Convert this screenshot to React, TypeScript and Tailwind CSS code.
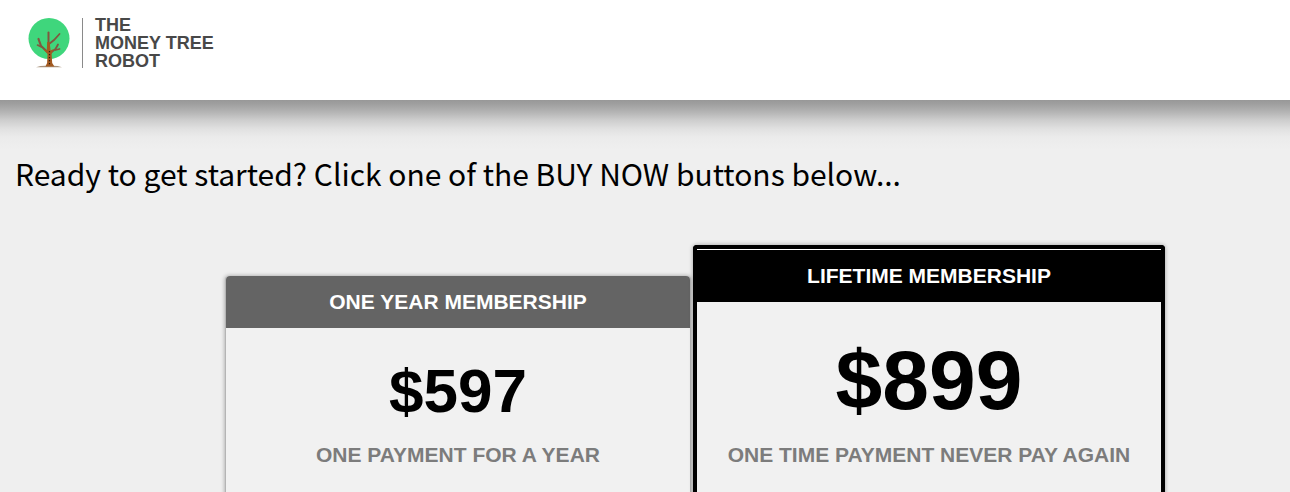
interface Plan {
  title: string;
  price: string;
  note: string;
  featured?: boolean;
}

const plans: Plan[] = [
  {
    title: "ONE YEAR MEMBERSHIP",
    price: "$597",
    note: "ONE PAYMENT FOR A YEAR",
  },
  {
    title: "LIFETIME MEMBERSHIP",
    price: "$899",
    note: "ONE TIME PAYMENT NEVER PAY AGAIN",
    featured: true,
  },
];

function TreeLogo() {
  return (
    <svg viewBox="0 0 42 50" className="h-[50px] w-[42px]" aria-hidden="true">
      <circle cx="21" cy="20.5" r="20.5" fill="#3fd67c" />
      <path d="M8 49.2q5-1.6 10-1.4h7q5 0 9 1.4z" fill="#a8927c" />
      {/* Branches */}
      <g fill="none" stroke="#80583f" strokeLinecap="round">
        <path d="M20.5 33V14.5" strokeWidth="2" />
        <path d="M19.5 34l-6.5-6-2.5-7" strokeWidth="2.2" />
        <path d="M13.5 29l-4-2" strokeWidth="1.6" />
        <path d="M21 26l5-4 5.5-6" strokeWidth="1.8" />
        <path d="M22.5 35l5-4 2.5-4.5M27.5 32l4-1" strokeWidth="1.8" />
      </g>
      {/* Trunk */}
      <path
        d="M19.2 24h2.4l1 8.500 3-1.500-2 5 .6 9 2.200 3.500h-9l1.700-3.500.4-9-4.500-5 3.800 1.500z"
        fill="#a35a20"
      />
      <path
        d="M21.5 33v14"
        stroke="#2c1a0c"
        strokeWidth="1.2"
        strokeDasharray="1.2 1.8"
      />
    </svg>
  );
}

function PlanCard({ title, price, note, featured }: Plan) {
  if (featured) {
    return (
      <article className="rounded-t border-4 border-b-0 border-black bg-[#f1f1f1] text-center shadow-[0_0_4px_rgba(0,0,0,0.35)]">
        <h2 className="border-t border-white bg-black py-3 text-[21px] leading-7 font-bold text-white">
          {title}
        </h2>
        <p className="pt-9 text-[84px] leading-[84px] font-bold text-black">
          {price}
        </p>
        <p className="pt-5 pb-9 text-[21px] leading-[26px] font-bold text-[#7c7c7c]">
          {note}
        </p>
      </article>
    );
  }

  return (
    <article className="mt-[31px] rounded-t border-x border-[#b4b4b4] bg-[#f1f1f1] text-center shadow-[0_0_4px_rgba(0,0,0,0.35)]">
      <h2 className="rounded-t bg-[#646464] py-3 text-[21px] leading-7 font-bold text-white">
        {title}
      </h2>
      <p className="pt-8 text-[62px] leading-[62px] font-bold text-black">
        {price}
      </p>
      <p className="pt-5 pb-9 text-[21px] leading-[26px] font-bold text-[#7c7c7c]">
        {note}
      </p>
    </article>
  );
}

export default function App() {
  return (
    <div className="flex min-h-screen flex-col bg-[#efefef] font-['Liberation_Sans',Arial,sans-serif]">
      <header className="bg-white px-7 pt-[18px] pb-8">
        <a href="#" className="inline-flex align-top">
          <TreeLogo />
          <span className="ml-3 flex h-[50px] items-center border-l border-[#8a8a8a] pl-3 text-[18px] leading-[18px] font-bold text-[#484848]">
            <span className="block">
              THE
              <br />
              MONEY TREE
              <br />
              ROBOT
            </span>
          </span>
        </a>
      </header>

      <main className="flex flex-1 flex-col bg-[linear-gradient(to_bottom,#989898_0px,#9f9f9f_4px,#b4b4b4_12px,#cdcdcd_20px,#e1e1e1_29px,#ebebeb_37px,#efefef_50px)] bg-no-repeat">
        <h1 className="px-[15px] pt-12 font-['Noto_Sans_CJK_SC',sans-serif] text-[30px] leading-[50px] text-black">
          Ready to get started? Click one of the BUY NOW buttons below...
        </h1>

        <section className="grid flex-1 grid-cols-[466fr_472fr] gap-[2px] pt-[47px] pr-[125px] pl-[225px]">
          {plans.map((plan) => (
            <PlanCard key={plan.title} {...plan} />
          ))}
        </section>
      </main>
    </div>
  );
}
